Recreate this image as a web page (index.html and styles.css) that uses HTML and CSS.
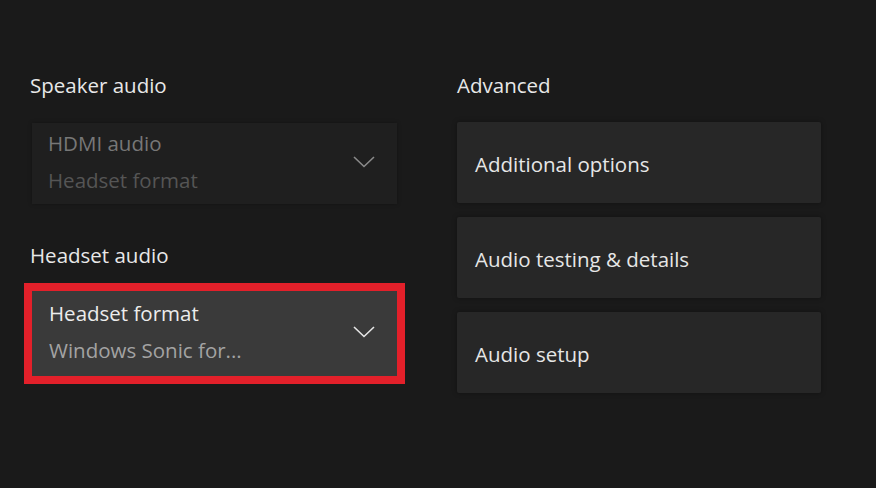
FILE: index.html
```html
<!DOCTYPE html>
<html lang="en">
<head>
<meta charset="utf-8">
<title>Audio settings</title>
<link rel="stylesheet" href="styles.css">
</head>
<body>
<main class="page">
  <section class="col col-left">
    <h2 class="heading">Speaker audio</h2>
    <div class="select select-disabled">
      <div class="select-text">
        <div class="line line-main">HDMI audio</div>
        <div class="line line-sub">Headset format</div>
      </div>
      <svg class="chev" width="22" height="12" viewBox="0 0 22 12"><path d="M1 1 L11 10.5 L21 1" fill="none" stroke="currentColor" stroke-width="1.6"/></svg>
    </div>

    <h2 class="heading heading-2">Headset audio</h2>
    <div class="select select-focus">
      <div class="select-text">
        <div class="line line-main">Headset format</div>
        <div class="line line-sub">Windows Sonic for...</div>
      </div>
      <svg class="chev" width="22" height="12" viewBox="0 0 22 12"><path d="M1 1 L11 10.5 L21 1" fill="none" stroke="currentColor" stroke-width="1.6"/></svg>
      <div class="highlight"></div>
    </div>
  </section>

  <section class="col col-right">
    <h2 class="heading">Advanced</h2>
    <div class="cards">
      <div class="card">Additional options</div>
      <div class="card">Audio testing &amp; details</div>
      <div class="card">Audio setup</div>
    </div>
  </section>
</main>
</body>
</html>
```
FILE: styles.css
```css
html, body {
  margin: 0;
  padding: 0;
  background: #1a1a1a;
  height: 100%;
}
body {
  font-family: "Open Sans", "Noto Sans", sans-serif;
  font-size: 20.5px;
  color: #e6e6e6;
  overflow: hidden;
}
.page {
  display: grid;
  grid-template-columns: 367px 364px;
  column-gap: 60px;
  padding: 71px 0 0 30px;
}
.heading {
  margin: 0;
  font-weight: 400;
  font-size: 20.5px;
  line-height: 28px;
  color: #e8e8e8;
}
.heading-2 {
  margin-top: 37px;
}
.select {
  position: relative;
  display: flex;
  align-items: center;
  justify-content: space-between;
  margin-left: 2px;
  width: 365px;
  box-sizing: border-box;
}
.select-disabled {
  margin-top: 24px;
  height: 81px;
  padding: 2px 22px 5px 16px;
  background: #1f1f1f;
  box-shadow: 0 0 4px rgba(0,0,0,0.3);
}
.select-focus {
  margin-top: 22px;
  height: 85px;
  padding: 4px 22px 7px 17px;
  background: #3a3a3a;
}
.line {
  line-height: 37px;
  white-space: nowrap;
}
.select-disabled .line-main { color: #777777; }
.select-disabled .line-sub { color: #555555; }
.select-disabled .chev { color: #8a8a8a; }
.select-focus .line-main { color: #ececec; }
.select-focus .line-sub { color: #a3a3a3; }
.select-focus .chev { color: #e6e6e6; }
.chev {
  display: block;
  flex: none;
}
.highlight {
  position: absolute;
  top: -8px;
  left: -8px;
  right: -8px;
  bottom: -8px;
  border: 8px solid #e3202a;
  pointer-events: none;
}
.cards {
  margin-top: 23px;
  display: flex;
  flex-direction: column;
  gap: 14px;
}
.card {
  height: 81px;
  box-sizing: border-box;
  padding: 4px 18px 0;
  display: flex;
  align-items: center;
  background: #272727;
  border-radius: 2px;
  color: #e6e6e6;
  line-height: 37px;
  box-shadow: 0 0 5px rgba(0,0,0,0.35);
}
```
